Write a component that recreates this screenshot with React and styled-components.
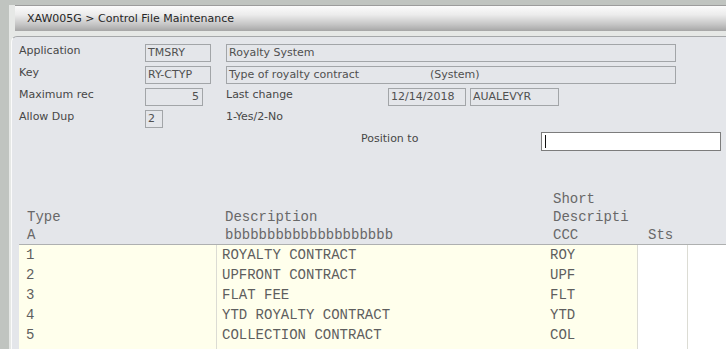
import { createGlobalStyle, styled } from "styled-components";

const GlobalStyle = createGlobalStyle`
  html, body {
    margin: 0;
    padding: 0;
    overflow: hidden;
    background: #c0c4c0;
  }
  body {
    font-family: "DejaVu Sans", Verdana, sans-serif;
  }
`;

const rows = [
  { code: "1", desc: "ROYALTY CONTRACT", short: "ROY" },
  { code: "2", desc: "UPFRONT CONTRACT", short: "UPF" },
  { code: "3", desc: "FLAT FEE", short: "FLT" },
  { code: "4", desc: "YTD ROYALTY CONTRACT", short: "YTD" },
  { code: "5", desc: "COLLECTION CONTRACT", short: "COL" },
];

const COLS = "198px 328px 93px 50px 1fr";

export default function App() {
  return (
    <>
      <GlobalStyle />
      <Page>
        <Frame>
          <TitleBar>XAW005G &gt; Control File Maintenance</TitleBar>
          <Panel>
            <Form>
              <Label>Application</Label>
              <Field $w={66}>TMSRY</Field>
              <Field $w={450}>Royalty System</Field>

              <Label>Key</Label>
              <Field $w={66}>RY-CTYP</Field>
              <Field $w={450}>
                <Lead>Type of royalty contract</Lead>(System)
              </Field>

              <Label>Maximum rec</Label>
              <Field $w={58} $right>5</Field>
              <Inline>
                <Label $w={162}>Last change</Label>
                <Field $w={78}>12/14/2018</Field>
                <Field $w={89}>AUALEVYR</Field>
              </Inline>

              <Label>Allow Dup</Label>
              <Field $w={18}>2</Field>
              <Label>1-Yes/2-No</Label>
            </Form>

            <PositionRow>
              <Label $w={180}>Position to</Label>
              <PositionBox>
                <Caret />
              </PositionBox>
            </PositionRow>

            <Table>
              <HeadRow>
                <HeadCell $pad={8}>
                  <div>Type</div>
                  <div>A</div>
                </HeadCell>
                <HeadCell $pad={8}>
                  <div>Description</div>
                  <div>bbbbbbbbbbbbbbbbbbbb</div>
                </HeadCell>
                <HeadCell $pad={8}>
                  <div>Short</div>
                  <div>Descripti</div>
                  <div>CCC</div>
                </HeadCell>
                <HeadCell $pad={10}>
                  <div>Sts</div>
                </HeadCell>
                <HeadCell />
              </HeadRow>
              <Body>
                {rows.map((r) => (
                  <BodyRow key={r.code}>
                    <Cell $pad={6} $line>{r.code}</Cell>
                    <Cell $pad={5}>{r.desc}</Cell>
                    <Cell $pad={5} $line>{r.short}</Cell>
                    <Cell $white $line />
                    <Cell $white />
                  </BodyRow>
                ))}
                <BodyRow>
                  <Cell $line />
                  <Cell />
                  <Cell $line />
                  <Cell $white $line />
                  <Cell $white />
                </BodyRow>
              </Body>
            </Table>
          </Panel>
        </Frame>
      </Page>
    </>
  );
}

const Page = styled.div`
  width: 100%;
  height: 349px;
  padding: 5px 0 0 9px;
  box-sizing: border-box;
  overflow: hidden;
`;

const Frame = styled.div`
  height: 100%;
  padding-left: 2px;
  background: #e6e8e6;
  display: flex;
  flex-direction: column;
  gap: 5px;
`;

const TitleBar = styled.div`
  flex: none;
  margin-left: 4px;
  height: 26px;
  box-sizing: border-box;
  border-top: 1px solid #9c9c9c;
  background: linear-gradient(#fbfbfb 0%, #ececec 35%, #c4c4c4 75%, #a6a6a6 100%);
  display: flex;
  align-items: center;
  padding-left: 12px;
  font-size: 11px;
  color: #262626;
`;

const Panel = styled.div`
  flex: 1;
  min-height: 0;
  overflow: hidden;
  background: #e4e6ea;
  border-top: 1px solid #a6a8aa;
  border-left: 1px solid #fbfbfb;
  border-top-left-radius: 6px;
  padding: 7px 0 0 7px;
`;

const Form = styled.div`
  display: grid;
  grid-template-columns: 126px 81px 1fr;
  grid-auto-rows: 18px;
  row-gap: 4px;
  align-items: start;
`;

const Label = styled.div`
  font-size: 11px;
  line-height: 14px;
  color: #474747;
  white-space: nowrap;
  ${(p) => (p.$w ? `width: ${p.$w}px; flex: none;` : "")}
`;

const Field = styled.div`
  width: ${(p) => p.$w}px;
  height: 18px;
  box-sizing: border-box;
  border: 1px solid #a2a5a8;
  padding: 0 3px 0 2px;
  font-size: 11px;
  line-height: 16px;
  color: #505050;
  text-align: ${(p) => (p.$right ? "right" : "left")};
  white-space: nowrap;
  overflow: hidden;
  flex: none;
`;

const Lead = styled.span`
  display: inline-block;
  width: 201px;
`;

const Inline = styled.div`
  display: flex;
  align-items: flex-start;
  gap: 4px;

  & > :first-child {
    margin-right: -4px;
  }
`;

const PositionRow = styled.div`
  display: flex;
  align-items: flex-start;
  padding-left: 342px;
  margin-top: 4px;
  height: 19px;
`;

const PositionBox = styled.div`
  width: 180px;
  height: 19px;
  box-sizing: border-box;
  border: 1px solid #7c7c7c;
  background: #ffffff;
  padding: 2px 0 0 3px;
`;

const Caret = styled.div`
  width: 1px;
  height: 13px;
  background: #111;
`;

const Table = styled.div`
  margin-top: 38px;
  font-family: "Liberation Mono", "Courier New", monospace;
  font-size: 14px;
`;

const HeadRow = styled.div`
  display: grid;
  grid-template-columns: ${COLS};
  align-items: end;
  height: 55px;
`;

const HeadCell = styled.div`
  padding-left: ${(p) => p.$pad || 0}px;
  line-height: 18px;
  color: #686868;
  white-space: nowrap;
`;

const Body = styled.div`
  border-top: 1px solid #aeb0b0;
  border-left: 1px solid #b4b6b6;
`;

const BodyRow = styled.div`
  display: grid;
  grid-template-columns: ${COLS};
  height: 20px;
  margin-left: -1px;
`;

const Cell = styled.div`
  padding-left: ${(p) => p.$pad || 0}px;
  background: ${(p) => (p.$white ? "#ffffff" : "#ffffec")};
  border-right: ${(p) => (p.$line ? "1px solid #dcdcd4" : "none")};
  line-height: 20px;
  color: #5e5e5e;
  white-space: nowrap;
  overflow: hidden;
  &:first-child {
    padding-left: ${(p) => (p.$pad || 0) + 1}px;
  }
`;
